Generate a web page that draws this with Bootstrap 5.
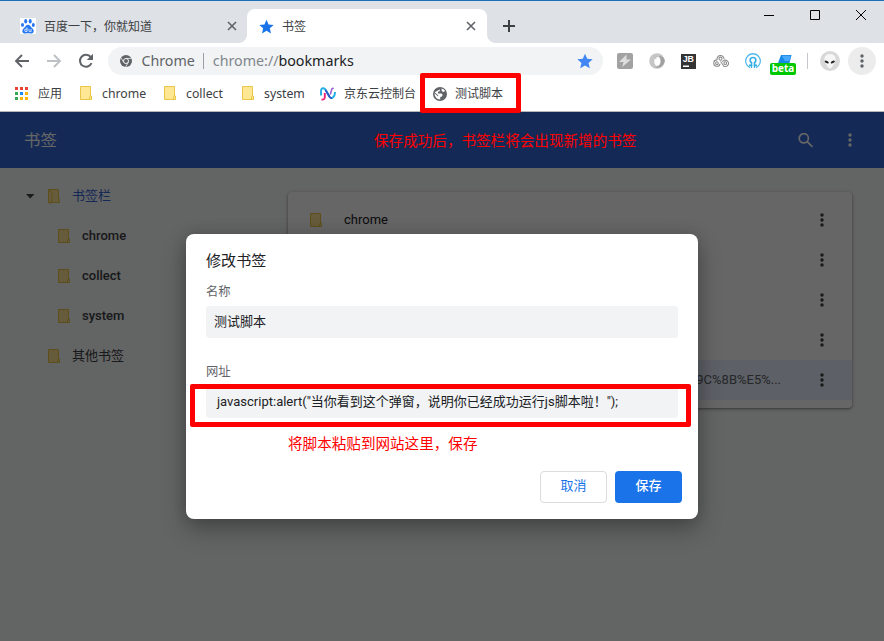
<!DOCTYPE html>
<html lang="zh-CN">
<head>
<meta charset="utf-8">
<title>书签</title>
<link rel="stylesheet" href="https://cdn.jsdelivr.net/npm/bootstrap@5.3.0/dist/css/bootstrap.min.css">
<style>
body{width:884px;height:641px;overflow:hidden;font-family:"Open Sans","Noto Sans CJK SC",sans-serif;font-size:12px;line-height:1;color:#3c4043;background:#fff}
svg{display:block;flex:none}
.tabstrip{height:43px;background:#dee1e6;border-top:1px solid #1b6fb5;padding-top:8px}
.tab-idle{width:247px;height:34px;padding:0 10px 0 20px}
.tab-live{width:240px;height:34px;background:#fff;border-radius:8px 8px 0 0;padding:0 11px 0 12px;color:#3c4043}
.tab-idle span,.tab-live span{padding-top:2px}
.tab-live::before,.tab-live::after{content:"";position:absolute;bottom:0;width:8px;height:8px}
.tab-live::before{left:-8px;background:radial-gradient(circle at 0 0,transparent 7.5px,#fff 8px)}
.tab-live::after{right:-8px;background:radial-gradient(circle at 100% 0,transparent 7.5px,#fff 8px)}
.winctl{margin-top:-22px;margin-left:auto;padding-right:17px;gap:34px}
.toolbar{height:36px;padding-left:14px}
.omnibox{width:495px;height:28px;border-radius:14px;background:#f1f3f4;margin-left:14px;padding:0 10px 0 12px;font-family:"Noto Sans","Noto Sans CJK SC",sans-serif;font-size:14.25px;color:#5f6368}
.omnibox .vline{width:1px;height:16px;background:#9aa0a6;margin:0 9px 0 8px}
.omnibox .host{color:#80868b}
.omnibox .path{color:#202124}
.ext{gap:16px;margin-left:14px}
.bar-sep{width:1px;height:16px;background:#c4c7cb;margin:0 12px 0 14px}
.beta-tag{position:absolute;left:-7px;top:10px;width:26px;height:12px;border-radius:2px;background:#00c800;color:#fff;font:700 10px/11px "Open Sans",sans-serif;text-align:center}
.menu-dot{width:28px;height:28px;border-radius:50%;background:#ececec}
.bmbar{height:32px;padding-left:15px;padding-bottom:3px;font-size:12px}
.bmbar .bm{margin-right:17px}
.bmbar .bm svg{margin-right:10px}
.bmbar .latin{font-family:"Noto Sans",sans-serif;font-size:12.25px;padding-top:1px}
.bmbar .name{padding-top:1px}
.page{height:530px;background:#f8f9fa;border-top:1px solid #b6b6b6;font-family:Roboto,"Noto Sans CJK SC",sans-serif;font-size:13px}
.apphead{height:56px;background:#3367d6;color:#fff;padding:0 28px 0 24px;font-size:16.4px}
.apphead .ttl{padding-top:3px}
.apphead .lens{margin-right:35px}
.sidenav{width:288px;padding-top:8px;font-weight:500;color:#3c4043}
.sidenav .node{height:40px;padding:0 0 2px 57px}
.sidenav .node>svg{position:relative;top:1px}
.sidenav .fold{margin-right:12px}
.sidenav .node.top{padding-left:47px}
.sidenav .node.open{padding-left:26px;color:#3367d6}
.sidenav .open .fold{margin-left:12px}
.sheet{width:564px;height:216px;margin-top:24px;padding:8px 0;background:#fff;border-radius:4px;box-shadow:0 1px 2px rgba(60,64,67,.4),0 1px 3px 1px rgba(60,64,67,.2);color:#202124}
.sheet .entry{height:40px;padding:0 28px 0 21px}
.sheet .entry span{padding-bottom:2px}
.sheet .fold{margin-right:22px}
.sheet .picked{background:#e8f0fe}
.sheet .addr{color:#5f6368;margin-right:39px}
.shade{position:absolute;inset:0;background:rgba(0,0,0,.6)}
.dlg{width:512px;height:285px;background:#fff;border-radius:8px;padding:19px 20px 16px;box-shadow:0 0 14px rgba(0,0,0,.12),0 10px 24px rgba(0,0,0,.3);color:#202124}
.dlg h1{font-size:15.1px;line-height:17px;font-weight:400;margin:0 0 15px}
.dlg label{font-size:12.3px;line-height:14px;color:#5f6368;margin-bottom:7px;display:block}
.dlg .lbl-url{margin-top:27px}
.field{height:32px;border-radius:4px;background:#f1f3f4;padding:0 8px 2px;font-size:13px}
.field.url{padding-left:11px}
.btn-dlg{width:67px;height:32px;padding:0 0 3px;font-size:13px;line-height:1;border-radius:4px}
.btn-no{color:#1a73e8;border:1px solid #dadce0;background:#fff}
.btn-ok{color:#fff;background:#1a73e8;font-weight:500}
.dlg .acts{margin-right:-4px}
.frame{position:absolute;border:5px solid #f00;border-radius:2px;z-index:5}
.frame-bm{left:-12px;top:-14px;width:101px;height:40px}
.frame-url{left:-16px;top:-2px;width:501px;height:43px}
.note{position:absolute;color:#f00;font-size:14.58px;line-height:18px;white-space:nowrap;z-index:5;font-family:"Noto Sans CJK SC",sans-serif}
.note-top{left:374px;top:19px}
.note-dlg{left:82px;top:48px}
</style>
<script src="https://cdn.jsdelivr.net/npm/bootstrap@5.3.0/dist/js/bootstrap.bundle.min.js"></script>
</head>
<body>
<svg width="0" height="0" class="position-absolute">
<symbol id="fold" viewBox="0 0 13 15"><path d="M1.500.500h10v9.500h1v3.500h-11z" fill="#ffe793" stroke="#e9c548"/><path d="M10.500 13.500v-2.500l1-1" fill="none" stroke="#e9c548"/></symbol>
<symbol id="dots" viewBox="0 0 4 14"><circle cx="2" cy="2" r="1.700"/><circle cx="2" cy="7" r="1.700"/><circle cx="2" cy="12" r="1.700"/></symbol>
<symbol id="cross" viewBox="0 0 10 10"><path d="M1 1l8 8M9 1l-8 8" fill="none" stroke="#5f6368" stroke-width="1.600"/></symbol>
<symbol id="star" viewBox="0 0 24 24"><path d="M12 1l3.300 7.700 8.200.700-6.200 5.500 1.900 8.100-7.200-4.300L4.800 23l1.900-8.100L.5 9.400l8.200-.700z"/></symbol>
</svg>

<header class="tabstrip d-flex">
  <div class="tab-idle d-flex align-items-center">
    <svg width="16" height="16" viewBox="0 0 16 16"><path fill="#fff" d="M0 0h16v16H0z"/><g fill="#2577f2"><ellipse cx="5.700" cy="3.200" rx="1.500" ry="2.200"/><ellipse cx="10.200" cy="3.200" rx="1.500" ry="2.200"/><ellipse cx="2.500" cy="6.900" rx="1.500" ry="1.900"/><ellipse cx="13.300" cy="7" rx="1.500" ry="1.900"/><path d="M8 6.700c2 0 2.600 2 4 3.300 1.600 1.400 2 2.500 1.500 4-.7 2-3.500 1.400-5.500 1.300-2 .1-4.800.7-5.500-1.300-.5-1.500 0-2.600 1.500-4C5.400 8.700 6 6.700 8 6.700z"/></g><path d="M7 9.500v4H5.800a1.200 1.200 0 010-2.400H7M9 11v1.800q0 .8.800.8h1.300V11" fill="none" stroke="#fff" stroke-width=".8"/></svg>
    <span class="ms-2">百度一下，你就知道</span>
    <svg class="ms-auto" width="10" height="10"><use href="#cross"/></svg>
  </div>
  <div class="tab-live position-relative d-flex align-items-center">
    <svg width="15" height="15" fill="#1a73e8"><use href="#star"/></svg>
    <span class="ms-2">书签</span>
    <svg class="ms-auto" width="10" height="10"><use href="#cross"/></svg>
  </div>
  <svg class="align-self-center ms-3" width="12" height="12" viewBox="0 0 12 12"><path d="M6 0v12M0 6h12" stroke="#3c4043" stroke-width="2"/></svg>
  <div class="winctl d-flex align-items-center">
    <svg width="12" height="12" viewBox="0 0 12 12"><path d="M1 6.500h10" stroke="#000"/></svg>
    <svg width="12" height="12" viewBox="0 0 12 12"><path d="M1.500 1.500h9v9h-9z" fill="none" stroke="#000"/></svg>
    <svg width="12" height="12" viewBox="0 0 12 12"><path d="M1 1l10 10M11 1L1 11" stroke="#000"/></svg>
  </div>
</header>

<div class="toolbar d-flex align-items-center">
  <svg width="16" height="14" viewBox="0 0 16 14"><path d="M15 7H2M8 1L2 7l6 6" fill="none" stroke="#5f6368" stroke-width="1.900"/></svg>
  <svg class="ms-3" width="16" height="14" viewBox="0 0 16 14"><path d="M1 7h13M8 1l6 6-6 6" fill="none" stroke="#bdc1c6" stroke-width="1.900"/></svg>
  <svg class="ms-3" width="16" height="16" viewBox="0 0 16 16"><path d="M13.500 10.200A6 6 0 1 1 12.700 4" fill="none" stroke="#5f6368" stroke-width="2"/><path d="M15 .8V7H8.800z" fill="#5f6368"/></svg>
  <div class="omnibox d-flex align-items-center">
    <svg width="12" height="12" viewBox="0 0 12 12"><circle cx="6" cy="6" r="6" fill="#5f6368"/><circle cx="6" cy="6" r="2.500" fill="none" stroke="#f1f3f4"/><path d="M6 3.400h5.400M3.700 7.300L1 2.800M8.300 7.300L5.600 12" stroke="#f1f3f4" stroke-width=".8"/></svg>
    <span class="ms-2">&#8202;Chrome</span><span class="vline"></span>
    <span><span class="host">chrome://</span><span class="path">bookmarks</span></span>
    <svg class="ms-auto" width="16" height="16" fill="#4285f4"><use href="#star"/></svg>
  </div>
  <div class="ext d-flex align-items-center">
    <svg width="16" height="16" viewBox="0 0 16 16"><rect width="16" height="16" rx="2" fill="#a2a2a2"/><path d="M9.500 1.500L2 9h4.500l-1.300 5L14 6.500H9.500z" fill="#dedede"/></svg>
    <svg width="16" height="16" viewBox="0 0 16 16"><circle cx="8" cy="8" r="7.800" fill="#c6c6c6"/><path d="M5 14c6 1 9-6 5-11 3 0 5.800 2.500 5.800 5A7.800 7.800 0 015 14z" fill="#a0a0a0"/><ellipse cx="8.300" cy="8.300" rx="3" ry="4.400" fill="#fff"/><path d="M7.500 3.500c-1 1-1 1.500-.5 2.500" fill="none" stroke="#aaa"/></svg>
    <svg width="16" height="16" viewBox="0 0 16 16"><path fill="#343434" d="M0 1h15v15H0z"/><path fill="#fff" d="M2 12.500h6V14H2z"/><text x="1.700" y="9.300" fill="#fff" font-family="Liberation Sans" font-size="8.800" font-weight="700">JB</text></svg>
    <svg width="16" height="14" viewBox="0 0 17 14"><g fill="none" stroke="#8a8a8a" stroke-width="1.100"><path d="M4.500 6A3.700 3.700 0 1 1 11.700 5M7.500 10a3.400 3.400 0 1 1-3.500-4.200M10 8a3.400 3.400 0 1 1 1.500 4.500L8 7.500"/><circle cx="8" cy="4.500" r="1.600"/><circle cx="4.200" cy="9.300" r="1.400"/><circle cx="13" cy="9.300" r="1.400"/></g></svg>
    <svg width="16" height="16" viewBox="0 0 16 16"><path d="M5 14.700A7.300 7.300 0 1 1 11 14.700" fill="none" stroke="#58bdec" stroke-width="1.300"/><path d="M4 12.300h2.500V9.800C4.500 8.500 4.500 4.500 8 4.500s3.500 4 1.500 5.300v2.500H12" fill="none" stroke="#37aee6" stroke-width="1.700"/><path d="M6.500 12v3M9.500 12v3" stroke="#37aee6" stroke-width="1.300"/></svg>
    <div class="position-relative"><svg width="16" height="16" viewBox="0 0 16 16"><path d="M4 2h10.500l-2 8H1z" fill="#1688e5"/><path d="M4.800 2.800h8.700L12.300 8H8z" fill="#46a9ff"/></svg><span class="beta-tag">beta</span></div>
  </div>
  <span class="bar-sep"></span>
  <svg width="20" height="20" viewBox="0 0 20 20"><circle cx="10" cy="10" r="10" fill="#d8d8d8"/><path d="M10 3c6 0 7 6 4 10q-2.500 4.500-4 4.500T6 13C3 9 4 3 10 3" fill="#f6f6f6"/><ellipse cx="6.700" cy="11" rx="2.200" ry="1.200" transform="rotate(25 6.700 11)" fill="#222"/><ellipse cx="12.800" cy="11" rx="2.200" ry="1.200" transform="rotate(-25 12.800 11)" fill="#222"/></svg>
  <span class="menu-dot d-flex align-items-center justify-content-center ms-2"><svg width="4" height="14" fill="#5f6368"><use href="#dots"/></svg></span>
</div>

<nav class="bmbar d-flex align-items-center">
  <div class="bm d-flex align-items-center"><svg width="13" height="13" viewBox="0 0 13 13"><path d="M0 0h3v3H0zM5 0h3v3H5zM10 0h3v3h-3z" fill="#ea4335"/><path d="M0 5h3v3H0zM0 10h3v3H0z" fill="#34a853"/><path d="M5 5h3v3H5z" fill="#1a8cf0"/><path d="M10 5h3v3h-3zM5 10h3v3H5zM10 10h3v3h-3z" fill="#fbb505"/></svg><span class="name">应用</span></div>
  <div class="bm d-flex align-items-center"><svg width="13" height="15"><use href="#fold"/></svg><span class="latin" style="width:44px">chrome</span></div>
  <div class="bm d-flex align-items-center"><svg width="13" height="15"><use href="#fold"/></svg><span class="latin" style="width:38px">collect</span></div>
  <div class="bm d-flex align-items-center"><svg width="13" height="15"><use href="#fold"/></svg><span class="latin" style="width:39px">system</span></div>
  <svg class="me-2" width="16" height="14" viewBox="0 0 16 14"><path d="M1 8.500V4q0-3 2.500-2.800Q5 1.300 6 3.500l3.500 6.200q1.500 2 3 1 2.500-1.500 2.500-5.700" fill="none" stroke="#22aee6" stroke-width="1.900"/><path d="M5.500 3l4 6.700q1 1.500 2.500 1.300" fill="none" stroke="#3158c4" stroke-width="1.900"/><path d="M4.800 6v4.500q-.3 2.500-3.300 2" fill="none" stroke="#ed247b" stroke-width="1.900"/><path d="M10.300 7.500L11.800 2l1.700-1" fill="none" stroke="#9a5ad0" stroke-width="1.500"/></svg>
  <span class="name">京东云控制台</span>
  <div class="position-relative d-flex align-items-center ms-3"><svg width="15" height="14" viewBox="-1 0 15 14"><circle cx="7" cy="7" r="7" fill="#5f6368"/><path d="M8.500 1.500L6.800 2.500v1.700L5 4.800V6.500h3.500l1.200 1.300-.8 1.700-1.700.6v2.400C4 12.300 1.600 10 1.500 6.300l3.700 3.200V8.300L1.600 5.300M8.500 1.500c2 .4 3 1.300 3.600 2.500L10.500 5 8.800 4.300z" fill="#fff"/></svg><span class="ms-2 name text-nowrap">测试脚本</span><span class="frame frame-bm"></span></div>
</nav>

<main class="page position-relative">
  <div class="apphead d-flex align-items-center justify-content-between">
    <span class="ttl">书签</span>
    <div class="d-flex align-items-center">
      <svg class="lens" width="15" height="15" viewBox="0 0 15 15"><g fill="none" stroke="#fff" stroke-width="1.700"><circle cx="5.800" cy="5.300" r="4.600"/><path d="M9.200 8.700l5.200 5.200"/></g></svg>
      <svg width="4" height="14" fill="#fff" class="me-1"><use href="#dots"/></svg>
    </div>
  </div>
  <div class="d-flex align-items-start">
    <nav class="sidenav">
      <div class="node open d-flex align-items-center fw-normal"><svg width="9" height="5" viewBox="0 0 9 5"><path d="M0 0h8.500L4.200 4.500z" fill="#444"/></svg><svg class="fold" width="13" height="15" viewBox="0 0 13 15"><path d="M1.500.500h10v9.500h1v3.500h-11z" fill="#ffe793" stroke="#e9c548"/><path d="M1.500.500l3.500 3v7l-1 4-2.500-1z" fill="#ffe793" stroke="#e9c548"/></svg>书签栏</div>
      <div class="node d-flex align-items-center"><svg class="fold" width="13" height="15"><use href="#fold"/></svg>chrome</div>
      <div class="node d-flex align-items-center"><svg class="fold" width="13" height="15"><use href="#fold"/></svg>collect</div>
      <div class="node d-flex align-items-center"><svg class="fold" width="13" height="15"><use href="#fold"/></svg>system</div>
      <div class="node top d-flex align-items-center fw-normal"><svg class="fold" width="13" height="15"><use href="#fold"/></svg>其他书签</div>
    </nav>
    <section class="sheet">
      <div class="entry d-flex align-items-center"><svg class="fold" width="13" height="15"><use href="#fold"/></svg><span>chrome</span><svg class="ms-auto" width="4" height="14" fill="#3c4043"><use href="#dots"/></svg></div>
      <div class="entry d-flex align-items-center"><svg class="ms-auto" width="4" height="14" fill="#3c4043"><use href="#dots"/></svg></div>
      <div class="entry d-flex align-items-center"><svg class="ms-auto" width="4" height="14" fill="#3c4043"><use href="#dots"/></svg></div>
      <div class="entry d-flex align-items-center"><svg class="ms-auto" width="4" height="14" fill="#3c4043"><use href="#dots"/></svg></div>
      <div class="entry picked d-flex align-items-center"><span class="addr ms-auto">9C%8B%E5%...</span><svg width="4" height="14" fill="#3c4043"><use href="#dots"/></svg></div>
    </section>
  </div>
  <div class="shade d-flex align-items-center justify-content-center">
    <div class="dlg d-flex flex-column">
      <h1>修改书签</h1>
      <label>名称</label>
      <div class="field d-flex align-items-center">测试脚本</div>
      <label class="lbl-url">网址</label>
      <div class="field url d-flex align-items-center position-relative"><span class="text-nowrap">javascript:alert("当你看到这个弹窗，说明你已经成功运行js脚本啦！");</span><span class="frame frame-url"></span><span class="note note-dlg">将脚本粘贴到网站这里，保存</span></div>
      <div class="acts d-flex justify-content-end gap-2 mt-auto"><button class="btn btn-dlg btn-no">取消</button><button class="btn btn-dlg btn-ok">保存</button></div>
    </div>
  </div>
  <span class="note note-top">保存成功后，书签栏将会出现新增的书签</span>
</main>
</body>
</html>
